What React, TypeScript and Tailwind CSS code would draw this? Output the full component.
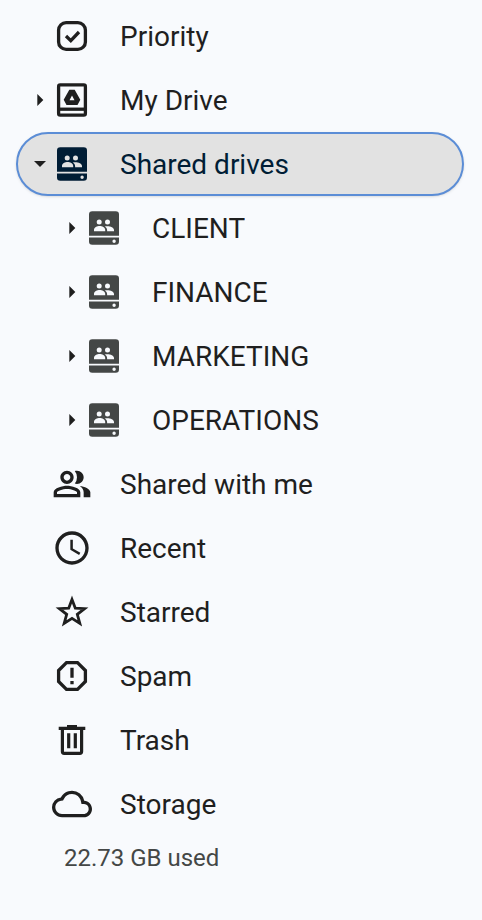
import { useState } from "react";
import type { ReactNode } from "react";
import { MdAccessTime, MdOutlineCloud, MdOutlinePeopleAlt } from "react-icons/md";

const iconClass = "w-10 h-10 shrink-0";

const PriorityIcon = () => (
  <svg viewBox="0 0 40 40" className={iconClass} fill="none" stroke="currentColor" strokeWidth="3.3" aria-hidden="true">
    <rect x="6.6" y="6.6" width="26.8" height="26.8" rx="7.5" />
    <path d="M14 20l4.8 4.6 8.2-8.6" />
  </svg>
);

const MyDriveIcon = () => (
  <svg viewBox="0 0 40 40" className={iconClass} fill="none" stroke="currentColor" strokeWidth="3.3" aria-hidden="true">
    <rect x="6.6" y="4.9" width="26.8" height="30.2" rx="1.6" />
    <path d="M6.5 29.2h27" />
    <path
      d="M17.3 9.8h5.4l5.6 10-2.8 5.2H14.5l-2.8-5.2zM20 15.6l-2.5 4.6h5z"
      fill="currentColor"
      fillRule="evenodd"
      stroke="none"
    />
  </svg>
);

const SharedDriveIcon = () => (
  <svg viewBox="0 0 40 40" className={iconClass} fill="currentColor" aria-hidden="true">
    <path
      fillRule="evenodd"
      d="M8.3 3.3h23.4A3.3 3.3 0 0 1 35 6.6v21.2H5V6.6a3.3 3.3 0 0 1 3.3-3.3zM15.2 11.4a2.5 2.5 0 1 0 0 5 2.5 2.5 0 0 0 0-5zM23.5 11.4a2.5 2.5 0 1 0 0 5 2.5 2.5 0 0 0 0-5zM10 23.3v-1.4c0-2.5 3.2-3.8 5.6-3.8s5.6 1.3 5.6 3.8v1.4zM20.8 18.5c3.6-1 9.2.4 9.2 3.4v1.4h-6.9v-1.2c0-1.6-.9-2.8-2.3-3.6z"
    />
    <path
      fillRule="evenodd"
      d="M5 29.6h30v3.8a3.3 3.3 0 0 1-3.3 3.3H8.3A3.3 3.3 0 0 1 5 33.4zM30.1 31.6a1.7 1.7 0 1 0 0 3.4 1.7 1.7 0 0 0 0-3.4z"
    />
  </svg>
);

const StarIcon = () => (
  <svg viewBox="0 0 40 40" className={iconClass} fill="none" stroke="currentColor" strokeWidth="2.8" strokeMiterlimit="10" aria-hidden="true">
    <path d="M20 7.5L23.3 16.2 32.6 16.7 25.3 22.4 27.8 31.4 20 26.3 12.2 31.4 14.7 22.4 7.4 16.7 16.7 16.2z" />
  </svg>
);

const SpamIcon = () => (
  <svg viewBox="0 0 40 40" className={iconClass} fill="none" stroke="currentColor" strokeWidth="3.3" aria-hidden="true">
    <path d="M14.5 6.6h11l7.9 7.9v11l-7.9 7.9h-11l-7.9-7.9v-11z" />
    <path d="M20 11.7v10M20 25v3.2" />
  </svg>
);

const TrashIcon = () => (
  <svg viewBox="0 0 40 40" className={iconClass} fill="none" stroke="currentColor" strokeWidth="3.2" aria-hidden="true">
    <path d="M6.7 8.3h26.6M15 6.6h10" />
    <path d="M10.4 9v22.6q0 1.8 1.8 1.8h15.6q1.8 0 1.8-1.8V9M16.7 13.3v15M23.3 13.3v15" />
  </svg>
);

const Caret = ({ open }: { open: boolean }) => (
  <svg viewBox="0 0 16 16" className="w-4 h-4" fill="#1f1f1f" aria-hidden="true">
    {open ? <path d="M2 5h12l-6 6z" /> : <path d="M5.3 2v12l6-6z" />}
  </svg>
);

type RowProps = {
  label: string;
  icon: ReactNode;
  expandable?: boolean;
  open?: boolean;
  selected?: boolean;
  nested?: boolean;
  onToggle?: () => void;
};

const Row = ({ label, icon, expandable, open = false, selected, nested, onToggle }: RowProps) => (
  <div
    className={`flex h-16 items-center rounded-full border-2 pr-4 ${nested ? "pl-[46px]" : "pl-[14px]"} ${
      selected ? "border-[#5b8dd6] bg-[#e2e2e2] text-[#001d35] shadow-sm" : "border-transparent text-[#1f1f1f]"
    }`}
  >
    {expandable ? (
      <button type="button" onClick={onToggle} aria-expanded={open} aria-label={`Toggle ${label}`} className="w-4 shrink-0">
        <Caret open={open} />
      </button>
    ) : (
      <span className="w-4 shrink-0" />
    )}
    <a href="#" aria-current={selected ? "page" : undefined} className="ml-1 flex min-w-0 flex-1 items-center gap-7">
      <span className={nested ? "text-[#444746]" : ""}>{icon}</span>
      <span className="truncate pt-0.5">{label}</span>
    </a>
  </div>
);

const drives = ["CLIENT", "FINANCE", "MARKETING", "OPERATIONS"];

const App = () => {
  const [isSharedOpen, setIsSharedOpen] = useState(true);

  return (
    <div className="min-h-screen bg-[#f8fafd] font-['Roboto',sans-serif]">
      <nav aria-label="Drive" className="pt-1 pl-4 pr-[18px] text-[28px] leading-9">
        <Row label="Priority" icon={<PriorityIcon />} />
        <Row label="My Drive" icon={<MyDriveIcon />} expandable />
        <Row
          label="Shared drives"
          icon={<SharedDriveIcon />}
          expandable
          selected
          open={isSharedOpen}
          onToggle={() => setIsSharedOpen(!isSharedOpen)}
        />

        {/* Shared drives */}
        {isSharedOpen &&
          drives.map((drive) => (
            <Row key={drive} label={drive} icon={<SharedDriveIcon />} expandable nested />
          ))}

        <Row label="Shared with me" icon={<MdOutlinePeopleAlt className={iconClass} />} />
        <Row label="Recent" icon={<MdAccessTime className={iconClass} />} />
        <Row label="Starred" icon={<StarIcon />} />
        <Row label="Spam" icon={<SpamIcon />} />
        <Row label="Trash" icon={<TrashIcon />} />
        <Row label="Storage" icon={<MdOutlineCloud className={iconClass} />} />
        <p className="pl-12 pt-1.5 text-2xl text-[#444746]">22.73 GB used</p>
      </nav>
    </div>
  );
};

export default App;
